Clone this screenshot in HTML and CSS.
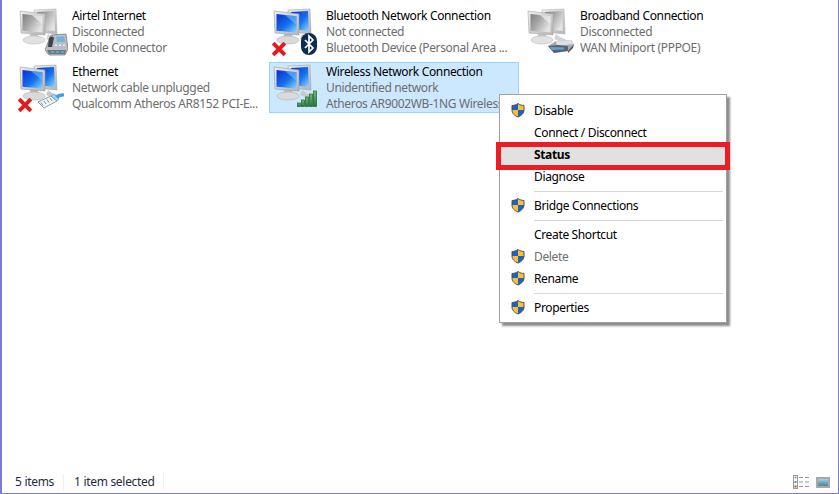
FILE: index.html
```html
<!DOCTYPE html>
<html lang="en">
<head>
<meta charset="utf-8">
<title>Network Connections</title>
<link rel="stylesheet" href="styles.css">
</head>
<body>
<svg class="defs" width="0" height="0" aria-hidden="true">
  <defs>
    <linearGradient id="blue" x1="0" y1="0" x2="1" y2="1"><stop offset="0" stop-color="#0b2fd0"/><stop offset=".55" stop-color="#1470ee"/><stop offset="1" stop-color="#8fd8ff"/></linearGradient>
    <linearGradient id="gray" x1="0" y1="0" x2="1" y2="0.6"><stop offset="0" stop-color="#7e7e7e"/><stop offset=".45" stop-color="#a6a6a6"/><stop offset="1" stop-color="#e4e4e4"/></linearGradient>
    <linearGradient id="frame" x1="0" y1="0" x2="1" y2="1"><stop offset="0" stop-color="#eeeeee"/><stop offset="1" stop-color="#b4b4b4"/></linearGradient>
    <linearGradient id="bar" x1="0" y1="0" x2="0" y2="1"><stop offset="0" stop-color="#6cc070"/><stop offset="1" stop-color="#1f7a35"/></linearGradient>
    <linearGradient id="pic" x1="0" y1="0" x2="0" y2="1"><stop offset="0" stop-color="#c4e0f4"/><stop offset=".5" stop-color="#6fa6c8"/><stop offset="1" stop-color="#4f7f6a"/></linearGradient>
    <clipPath id="shieldclip"><path d="M8 1.5C6.2 2.9 4.2 3.4 2 3.5V8c0 3.3 2.6 5.7 6 7 3.4-1.3 6-3.7 6-7V3.5c-2.2-.1-4.2-.6-6-2z"/></clipPath>
    <symbol id="shield" viewBox="0 0 16 16">
      <g clip-path="url(#shieldclip)">
        <rect x="0" y="0" width="8" height="8" fill="#1c62c4"/>
        <rect x="8" y="0" width="8" height="8" fill="#fcc12e"/>
        <rect x="0" y="8" width="8" height="8" fill="#fcc12e"/>
        <rect x="8" y="8" width="8" height="8" fill="#1c62c4"/>
      </g>
      <path d="M8 1.5C6.2 2.9 4.2 3.4 2 3.5V8c0 3.3 2.6 5.7 6 7 3.4-1.3 6-3.7 6-7V3.5c-2.2-.1-4.2-.6-6-2z" fill="none" stroke="#4a4f55" stroke-width="1"/>
    </symbol>
    <symbol id="pcs-gray" viewBox="0 0 50 50">
      <path d="M30 27l-2 5 11 4c2 0 2-3 0-4l-5-2z" fill="#d4d4d4"/>
      <path d="M16 3l22-1 1 25-21-2z" fill="url(#frame)" stroke="#b5b5b5" stroke-width=".6"/>
      <path d="M19 5l17-1 1 20-18-2z" fill="url(#gray)"/>
      <path d="M12 27h8l1 5h-10z" fill="#c8c8c8"/>
      <ellipse cx="16" cy="33" rx="11" ry="4" fill="#e2e2e2" stroke="#bcbcbc" stroke-width=".6"/>
      <path d="M2 4l25 3v21l-24-2z" fill="url(#frame)" stroke="#a8a8a8" stroke-width=".6"/>
      <path d="M4.500 7l20 2.300v16.300l-20-1.800z" fill="url(#gray)"/>
      <path d="M14 8.100l10.500 1.200v8z" fill="#f0f0f0" opacity=".7"/>
    </symbol>
    <symbol id="pcs-blue" viewBox="0 0 50 50">
      <path d="M30 27l-2 5 11 4c2 0 2-3 0-4l-5-2z" fill="#c9c9c9"/>
      <path d="M16 3l22-1 1 25-21-2z" fill="url(#frame)" stroke="#a5a5a5" stroke-width=".6"/>
      <path d="M19 5l17-1 1 20-18-2z" fill="url(#blue)"/>
      <path d="M12 27h8l1 5h-10z" fill="#bdbdbd"/>
      <ellipse cx="16" cy="33" rx="11" ry="4" fill="#dadada" stroke="#b0b0b0" stroke-width=".6"/>
      <path d="M2 4l25 3v21l-24-2z" fill="url(#frame)" stroke="#9c9c9c" stroke-width=".6"/>
      <path d="M4.500 7l20 2.300v16.300l-20-1.800z" fill="url(#blue)"/>
      <path d="M13 8l11.500 1.300v8.500z" fill="#7cc4ff" opacity=".55"/>
    </symbol>
    <symbol id="cross" viewBox="0 0 14 14">
      <path d="M0 2.500l2.500-2.500 4.500 4.500 4.500-4.500 2.500 2.500-4.500 4.500 4.500 4.500-2.500 2.500-4.500-4.500-4.500 4.500-2.500-2.500 4.500-4.500z" fill="#e8161a" stroke="#b01212" stroke-width=".4"/>
    </symbol>
    <symbol id="phone" viewBox="0 0 23 23">
      <path d="M6 2l15-1 2 15-3 6H4l-4-5z" fill="#b8bec4" stroke="#6c7278" stroke-width=".7"/>
      <path d="M11 4l8-.5 1 5-8 .5z" fill="#6fb2e4"/>
      <path d="M4 5c2-2 4-2 5 0l-2 9H3z" fill="#3d4348"/>
      <path d="M2 17h19l-1 4H4z" fill="#70777d"/>
      <path d="M6 18h3v2H6zM11 18h3v2h-3zM16 18h3v2h-3z" fill="#57a7df"/>
      <path d="M10 11.500h2v1.500h-2zM14 11.500h2v1.500h-2zM18 11.500h2v1.500h-2z" fill="#f0f0f0"/>
    </symbol>
    <symbol id="plug" viewBox="0 0 26 16">
      <path d="M0 9l13-6 6 5-13 7z" fill="#eef3f6" stroke="#6a8aa4" stroke-width=".8"/>
      <path d="M3 9.500l2 3M6 8l2 3M9 6.500l2 3M12 5l2 3" stroke="#7a93a8" stroke-width="1"/>
      <path d="M13 3l6 5 2-2-5-5z" fill="#a9d2ef" stroke="#5c93bf" stroke-width=".6"/>
      <path d="M17 3c3-2 6-3 9-2.500v3c-2 0-4 .5-6 2z" fill="#3d9cf0"/>
    </symbol>
    <symbol id="bt" viewBox="0 0 16 22">
      <rect x="0" y="0" width="16" height="22" rx="8" fill="#0c2c54"/>
      <path d="M4 7l8 8-4 4V3l4 4-8 8" fill="none" stroke="#fff" stroke-width="1.700"/>
    </symbol>
    <symbol id="signal" viewBox="0 0 20 17">
      <rect x=".5" y="13" width="3" height="3.500" fill="url(#bar)" stroke="#1d5e30" stroke-width=".7"/>
      <rect x="4.500" y="10" width="3" height="6.500" fill="url(#bar)" stroke="#1d5e30" stroke-width=".7"/>
      <rect x="8.500" y="7" width="3" height="9.500" fill="url(#bar)" stroke="#1d5e30" stroke-width=".7"/>
      <rect x="12.500" y="4" width="3" height="12.500" fill="url(#bar)" stroke="#1d5e30" stroke-width=".7"/>
      <rect x="16.500" y="1" width="3" height="15.500" fill="url(#bar)" stroke="#1d5e30" stroke-width=".7"/>
    </symbol>
    <symbol id="modem" viewBox="0 0 26 13">
      <path d="M0 6l8-5 15-1 3 4-6 7-14 2z" fill="#a4abb2"/>
      <path d="M8 1l15-1 3 4-17 2z" fill="#dde1e4"/>
      <path d="M0 6l10-1 10 1v5l-14 2z" fill="#5c646b"/>
      <path d="M2 7l14 .5v2l-12 .5z" fill="#5aa7df"/>
      <path d="M20 11l6-7-1 4-5 5z" fill="#4a5259"/>
    </symbol>
  </defs>
</svg>
<div class="window">
  <main class="grid">
    <div class="item">
      <div class="icon">
        <svg class="pcs"><use href="#pcs-gray"/></svg>
        <svg class="badge-phone"><use href="#phone"/></svg>
      </div>
      <div class="text">
        <div class="name">Airtel Internet</div>
        <div class="sub">Disconnected</div>
        <div class="sub">Mobile Connector</div>
      </div>
    </div>
    <div class="item">
      <div class="icon">
        <svg class="pcs"><use href="#pcs-blue"/></svg>
        <svg class="badge-cross"><use href="#cross"/></svg>
        <svg class="badge-bt"><use href="#bt"/></svg>
      </div>
      <div class="text">
        <div class="name">Bluetooth Network Connection</div>
        <div class="sub">Not connected</div>
        <div class="sub">Bluetooth Device (Personal Area ...</div>
      </div>
    </div>
    <div class="item">
      <div class="icon">
        <svg class="pcs"><use href="#pcs-gray"/></svg>
        <svg class="badge-modem"><use href="#modem"/></svg>
      </div>
      <div class="text">
        <div class="name">Broadband Connection</div>
        <div class="sub">Disconnected</div>
        <div class="sub">WAN Miniport (PPPOE)</div>
      </div>
    </div>
    <div class="item">
      <div class="icon">
        <svg class="pcs"><use href="#pcs-blue"/></svg>
        <svg class="badge-cross"><use href="#cross"/></svg>
        <svg class="badge-plug"><use href="#plug"/></svg>
      </div>
      <div class="text">
        <div class="name">Ethernet</div>
        <div class="sub">Network cable unplugged</div>
        <div class="sub">Qualcomm Atheros AR8152 PCI-E...</div>
      </div>
    </div>
    <div class="item selected">
      <div class="icon">
        <svg class="pcs"><use href="#pcs-blue"/></svg>
        <svg class="badge-signal"><use href="#signal"/></svg>
      </div>
      <div class="text">
        <div class="name">Wireless Network Connection</div>
        <div class="sub">Unidentified network</div>
        <div class="sub">Atheros AR9002WB-1NG Wireless...</div>
      </div>
    </div>
  </main>
  <footer class="status">
    <span class="count">5 items</span>
    <span class="selection">1 item selected</span>
    <div class="views">
      <svg class="view-details" viewBox="0 0 16 14">
        <rect x=".5" y=".5" width="4" height="13" fill="#fff" stroke="#9a9a9a"/>
        <rect x="1.500" y="1.500" width="2" height="2" fill="#a0a0a0"/>
        <rect x="1.500" y="6" width="2" height="2" fill="#4a90d8"/>
        <rect x="1.500" y="10.500" width="2" height="2" fill="#c03a2a"/>
        <path d="M6 2.500h4M12 2.500h4M6 7h4M12 7h4M6 11.500h4M12 11.500h4" stroke="#9a9a9a" stroke-width="1"/>
      </svg>
      <svg class="view-large" viewBox="0 0 14 11">
        <rect x="1" y="1" width="12" height="9" fill="url(#pic)" stroke="#a8a8a8" stroke-width="2"/>
      </svg>
    </div>
  </footer>
  <nav class="menu">
    <div class="row"><svg class="shield"><use href="#shield"/></svg>Disable</div>
    <div class="row">Connect / Disconnect</div>
    <div class="row current"><span class="redbox"></span><span class="label">Status</span></div>
    <div class="row">Diagnose</div>
    <div class="sep"></div>
    <div class="row"><svg class="shield"><use href="#shield"/></svg>Bridge Connections</div>
    <div class="sep"></div>
    <div class="row">Create Shortcut</div>
    <div class="row disabled"><svg class="shield"><use href="#shield"/></svg>Delete</div>
    <div class="row"><svg class="shield"><use href="#shield"/></svg>Rename</div>
    <div class="sep"></div>
    <div class="row"><svg class="shield"><use href="#shield"/></svg>Properties</div>
  </nav>
</div>
</body>
</html>
```
FILE: styles.css
```css
* { box-sizing: border-box; }
html, body { margin: 0; padding: 0; }
body { font-family: "Noto Sans", "Open Sans", sans-serif; font-size: 12px; background: #fff; color: #000; overflow: hidden; }
.defs { position: absolute; }
.window {
  position: relative;
  width: 839px;
  height: 494px;
  display: flex;
  flex-direction: column;
  border-left: 2px solid #7b7bd6;
  border-right: 1px solid #7b7bd6;
  border-bottom: 1px solid #7b7bd6;
  background: #fff;
}
.grid {
  flex: 1;
  display: grid;
  grid-template-columns: repeat(3, 250px);
  grid-auto-rows: 51px;
  column-gap: 4px;
  row-gap: 5px;
  padding: 6px 0 0 13px;
  align-content: start;
}
.item {
  display: flex;
  overflow: hidden;
  border: 1px solid transparent;
  padding-left: 2px;
}
.item.selected { background: #cce8ff; border-color: #99d1ff; }
.icon { position: relative; width: 54px; height: 49px; flex: none; }
.icon svg { position: absolute; display: block; }
.pcs { left: 0; top: 0; width: 50px; height: 50px; }
.badge-phone { left: 27px; top: 26px; width: 23px; height: 23px; }
.badge-cross { left: 0; top: 35px; width: 14px; height: 14px; }
.badge-bt { left: 29px; top: 26px; width: 16px; height: 22px; }
.badge-plug { left: 20px; top: 30px; width: 26px; height: 16px; }
.badge-signal { left: 25px; top: 27px; width: 20px; height: 17px; }
.badge-modem { left: 22px; top: 33px; width: 26px; height: 13px; }
.text { flex: 1; min-width: 0; padding-top: 1px; white-space: nowrap; }
.name, .sub { height: 16px; line-height: 16px; letter-spacing: -0.35px; }
.sub { color: #6d6d6d; }
.status {
  flex: none;
  height: 29px;
  display: flex;
  align-items: center;
  padding: 7px 8px 0 13px;
  color: #1f2d3d;
  letter-spacing: -0.3px;
}
.count { width: 49px; border-right: 1px solid #f0f0f0; height: 16px; line-height: 16px; margin-right: 10px; }
.selection { width: 90px; border-right: 1px solid #f0f0f0; height: 16px; line-height: 16px; }
.views { margin-left: auto; display: flex; align-items: center; gap: 7px; }
.view-details { width: 16px; height: 14px; display: block; }
.view-large { width: 14px; height: 11px; display: block; }
.menu {
  position: absolute;
  left: 497px;
  top: 94px;
  width: 228px;
  height: 229px;
  padding: 5px 2px 4px 2px;
  background: #fff;
  border: 1px solid #a0a0a0;
  box-shadow: 3px 3px 2px rgba(0, 0, 0, 0.45);
}
.row {
  position: relative;
  height: 22px;
  line-height: 22px;
  padding-left: 32px;
  white-space: nowrap;
  letter-spacing: -0.35px;
}
.row .shield { position: absolute; left: 8px; top: 2px; width: 16px; height: 16px; }
.row.disabled { color: #6d6d6d; }
.current .label { position: relative; font-weight: 700; }
.redbox {
  position: absolute;
  left: -6px;
  right: -6px;
  top: -2px;
  height: 28px;
  border: 5px solid #ed1c24;
  background: #e1e1e1;
}
.sep { height: 7px; margin-left: 32px; margin-right: 1px; padding-top: 3px; }
.sep::before { content: ""; display: block; height: 1px; background: #d7d7d7; }
```
